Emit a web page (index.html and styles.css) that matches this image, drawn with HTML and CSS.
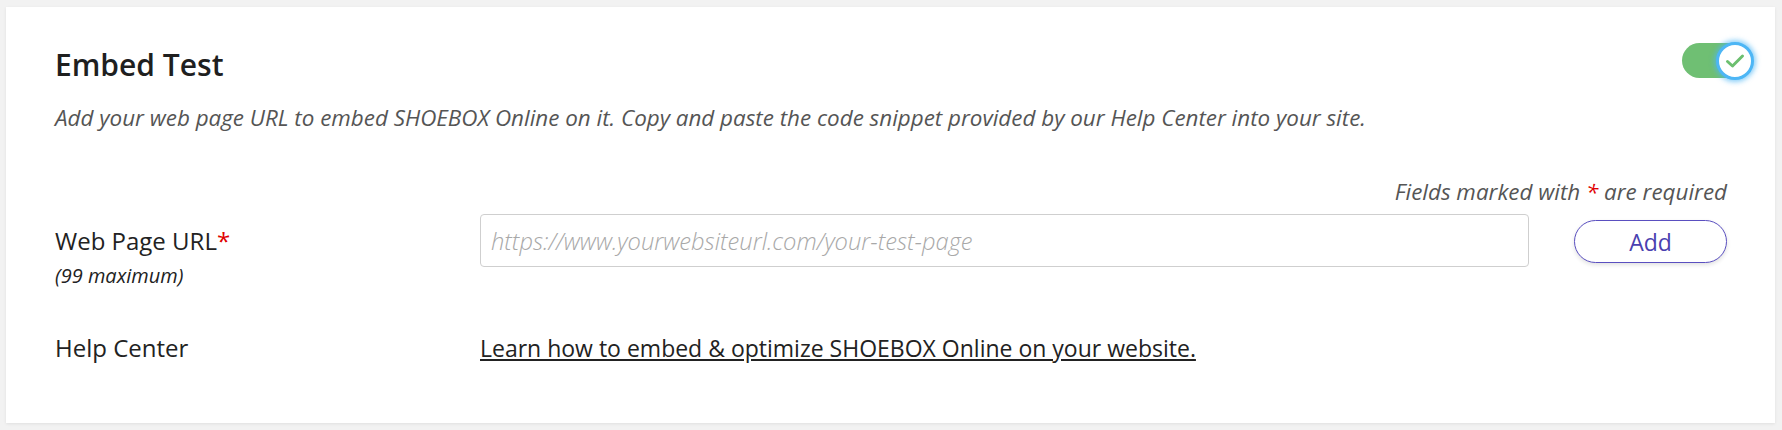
FILE: index.html
```html
<!DOCTYPE html>
<html lang="en">
<head>
<meta charset="utf-8">
<title>Embed Test</title>
<link rel="stylesheet" href="styles.css">
</head>
<body>
<section class="card">
  <header class="card-head">
    <h2 class="title">Embed Test</h2>
    <div class="toggle" role="switch" aria-checked="true">
      <span class="knob">
        <svg width="22" height="22" viewBox="0 0 22 22"><path d="M3.5 11.5 L8.5 16 L18.5 6" fill="none" stroke="#6cbf6f" stroke-width="3" stroke-linecap="round" stroke-linejoin="round"/></svg>
      </span>
    </div>
  </header>
  <p class="desc">Add your web page URL to embed SHOEBOX Online on it. Copy and paste the code snippet provided by our Help Center into your site.</p>
  <p class="required-note">Fields marked with <span class="star">*</span> are required</p>
  <div class="row row-url">
    <div class="label-col">
      <div class="label">Web Page URL<span class="star">*</span></div>
      <div class="hint">(99 maximum)</div>
    </div>
    <input class="url-input" type="text" placeholder="https://www.yourwebsiteurl.com/your-test-page">
    <button class="add-btn" type="button">Add</button>
  </div>
  <div class="row row-help">
    <div class="label-col"><div class="label">Help Center</div></div>
    <a class="help-link" href="#">Learn how to embed &amp; optimize SHOEBOX Online on your website.</a>
  </div>
</section>
</body>
</html>
```
FILE: styles.css
```css
* { box-sizing: border-box; }
html, body { margin: 0; }
body {
  background: #f2f2f2;
  padding: 7px 7px 7px 6px;
  font-family: "Open Sans", "Liberation Sans", sans-serif;
  color: #222;
}
.card {
  background: #fff;
  padding: 38px 48px 59px 49px;
  box-shadow: 0 1px 3px rgba(0,0,0,0.08);
}
.card-head {
  display: flex;
  justify-content: space-between;
  align-items: flex-start;
}
.title {
  margin: 0;
  font-size: 30px;
  font-weight: 600;
  color: #1f1f1f;
  line-height: 40px;
}
.toggle {
  width: 70px;
  height: 35px;
  border-radius: 18px;
  background: #6fbf73;
  display: flex;
  justify-content: flex-end;
  align-items: center;
  margin-top: -2px;
  margin-right: -25px;
}
.knob {
  width: 38px;
  height: 38px;
  margin-right: -2px;
  border-radius: 50%;
  background: #fff;
  border: 3px solid #4db6f5;
  box-shadow: 0 0 5px 2px rgba(77,182,245,0.65);
  display: flex;
  align-items: center;
  justify-content: center;
}
.desc {
  margin: 18px 0 0;
  font-style: italic;
  font-size: 22.4px;
  color: #555;
  line-height: 30px;
}
.required-note {
  margin: 44px 0 0;
  text-align: right;
  font-style: italic;
  font-size: 22.4px;
  color: #555;
  line-height: 30px;
}
.star { color: #e00000; }
.row {
  display: flex;
  align-items: flex-start;
}
.label-col {
  width: 425px;
  flex: none;
}
.label {
  font-size: 24px;
  line-height: 32px;
  color: #222;
}
.hint {
  font-size: 20px;
  font-style: italic;
  line-height: 26px;
  margin-top: 6px;
}
.row-url { margin-top: 7px; }
.row-url .label-col { padding-top: 11px; }
.url-input {
  flex: 1;
  height: 53px;
  border: 1px solid #cfcfcf;
  border-radius: 4px;
  padding: 0 10px;
  font-family: inherit;
  font-size: 23.7px;
  font-style: italic;
  color: #222;
  outline: none;
}
.url-input::placeholder { color: #a8a8a8; font-weight: 300; }
.add-btn {
  margin-left: 45px;
  margin-top: 6px;
  width: 153px;
  height: 43px;
  border-radius: 22px;
  border: 1.5px solid #5a4fc0;
  background: #fff;
  color: #4a3fb0;
  font-family: inherit;
  font-size: 23px;
  box-shadow: 0 2px 4px rgba(0,0,0,0.12);
}
.row-help { margin-top: 43px; }
.help-link {
  font-size: 23px;
  line-height: 32px;
  color: #222;
  text-decoration: underline;
}
```
